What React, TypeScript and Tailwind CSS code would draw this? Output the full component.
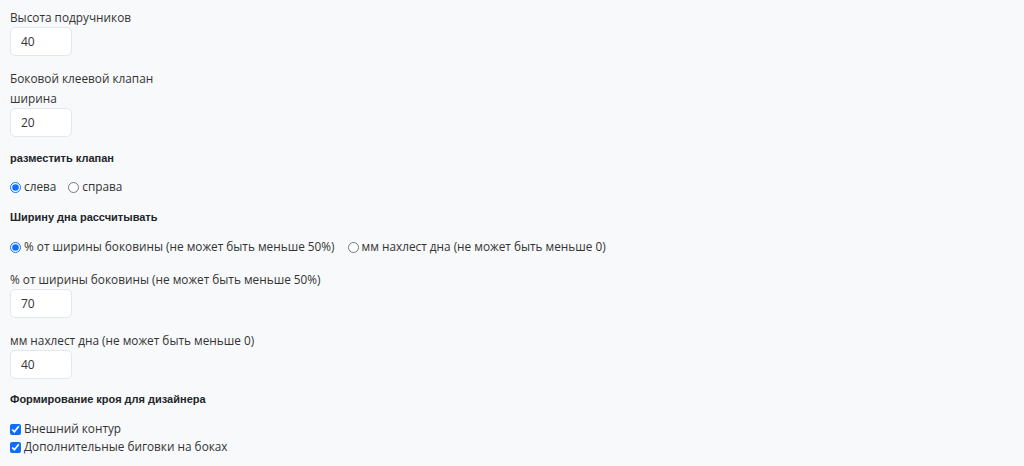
import { useState } from 'react';

const Field = ({ label, value, className = '' }: { label: React.ReactNode; value: string; className?: string }) => (
  <div className={className}>
    <div className="text-[11.8px] leading-[20px] text-[#333]">{label}</div>
    <input
      defaultValue={value}
      className="block w-[62px] h-[29px] px-[10px] bg-white border border-[#e4e7eb] rounded-[5px] text-[12px] text-[#333] outline-none"
    />
  </div>
);

const Heading = ({ children, className = '' }: { children: React.ReactNode; className?: string }) => (
  <div
    className={`text-[11px] leading-[20px] font-bold text-[#212529] ${className}`}
    style={{ fontFamily: '"Liberation Sans", Arial, sans-serif' }}
  >
    {children}
  </div>
);

const App = () => {
  const [side, setSide] = useState('left');
  const [mode, setMode] = useState('pct');

  return (
    <div
      className="min-h-screen bg-[#f8f9fa] pl-[10px] pt-[7px]"
      style={{ fontFamily: '"Open Sans", "Noto Sans", sans-serif' }}
    >
      <Field label="Высота подручников" value="40" />
      <Field
        className="mt-[12px]"
        label={
          <>
            Боковой клеевой клапан
            <br />
            ширина
          </>
        }
        value="20"
      />

      <Heading className="mt-[11px]">разместить клапан</Heading>
      <div className="mt-[9px] flex items-center h-[20px] text-[11.8px] text-[#333]">
        <label className="flex items-center mr-[12px]">
          <input
            type="radio"
            checked={side === 'left'}
            onChange={() => setSide('left')}
            className="w-[11px] h-[11px] m-0 mr-[3px] accent-[#0d6efd]"
          />
          слева
        </label>
        <label className="flex items-center">
          <input
            type="radio"
            checked={side === 'right'}
            onChange={() => setSide('right')}
            className="w-[11px] h-[11px] m-0 mr-[3px] accent-[#0d6efd]"
          />
          справа
        </label>
      </div>

      <Heading className="mt-[10px]">Ширину дна рассчитывать</Heading>
      <div className="mt-[10px] flex items-center h-[20px] text-[11.8px] text-[#333]">
        <label className="flex items-center mr-[13px]">
          <input
            type="radio"
            checked={mode === 'pct'}
            onChange={() => setMode('pct')}
            className="w-[11px] h-[11px] m-0 mr-[3px] accent-[#0d6efd]"
          />
          % от ширины боковины (не может быть меньше 50%)
        </label>
        <label className="flex items-center">
          <input
            type="radio"
            checked={mode === 'mm'}
            onChange={() => setMode('mm')}
            className="w-[11px] h-[11px] m-0 mr-[3px] accent-[#0d6efd]"
          />
          мм нахлест дна (не может быть меньше 0)
        </label>
      </div>

      <Field className="mt-[12px]" label="% от ширины боковины (не может быть меньше 50%)" value="70" />
      <Field className="mt-[12px]" label="мм нахлест дна (не может быть меньше 0)" value="40" />

      <Heading className="mt-[10px]">Формирование кроя для дизайнера</Heading>
      <div className="mt-[11px] text-[11.8px] text-[#333]">
        <label className="flex items-center h-[18px]">
          <input type="checkbox" defaultChecked className="w-[11px] h-[11px] m-0 mr-[3px] accent-[#0d6efd]" />
          Внешний контур
        </label>
        <label className="flex items-center h-[18px]">
          <input type="checkbox" defaultChecked className="w-[11px] h-[11px] m-0 mr-[3px] accent-[#0d6efd]" />
          Дополнительные биговки на боках
        </label>
      </div>
    </div>
  );
};

export default App;
